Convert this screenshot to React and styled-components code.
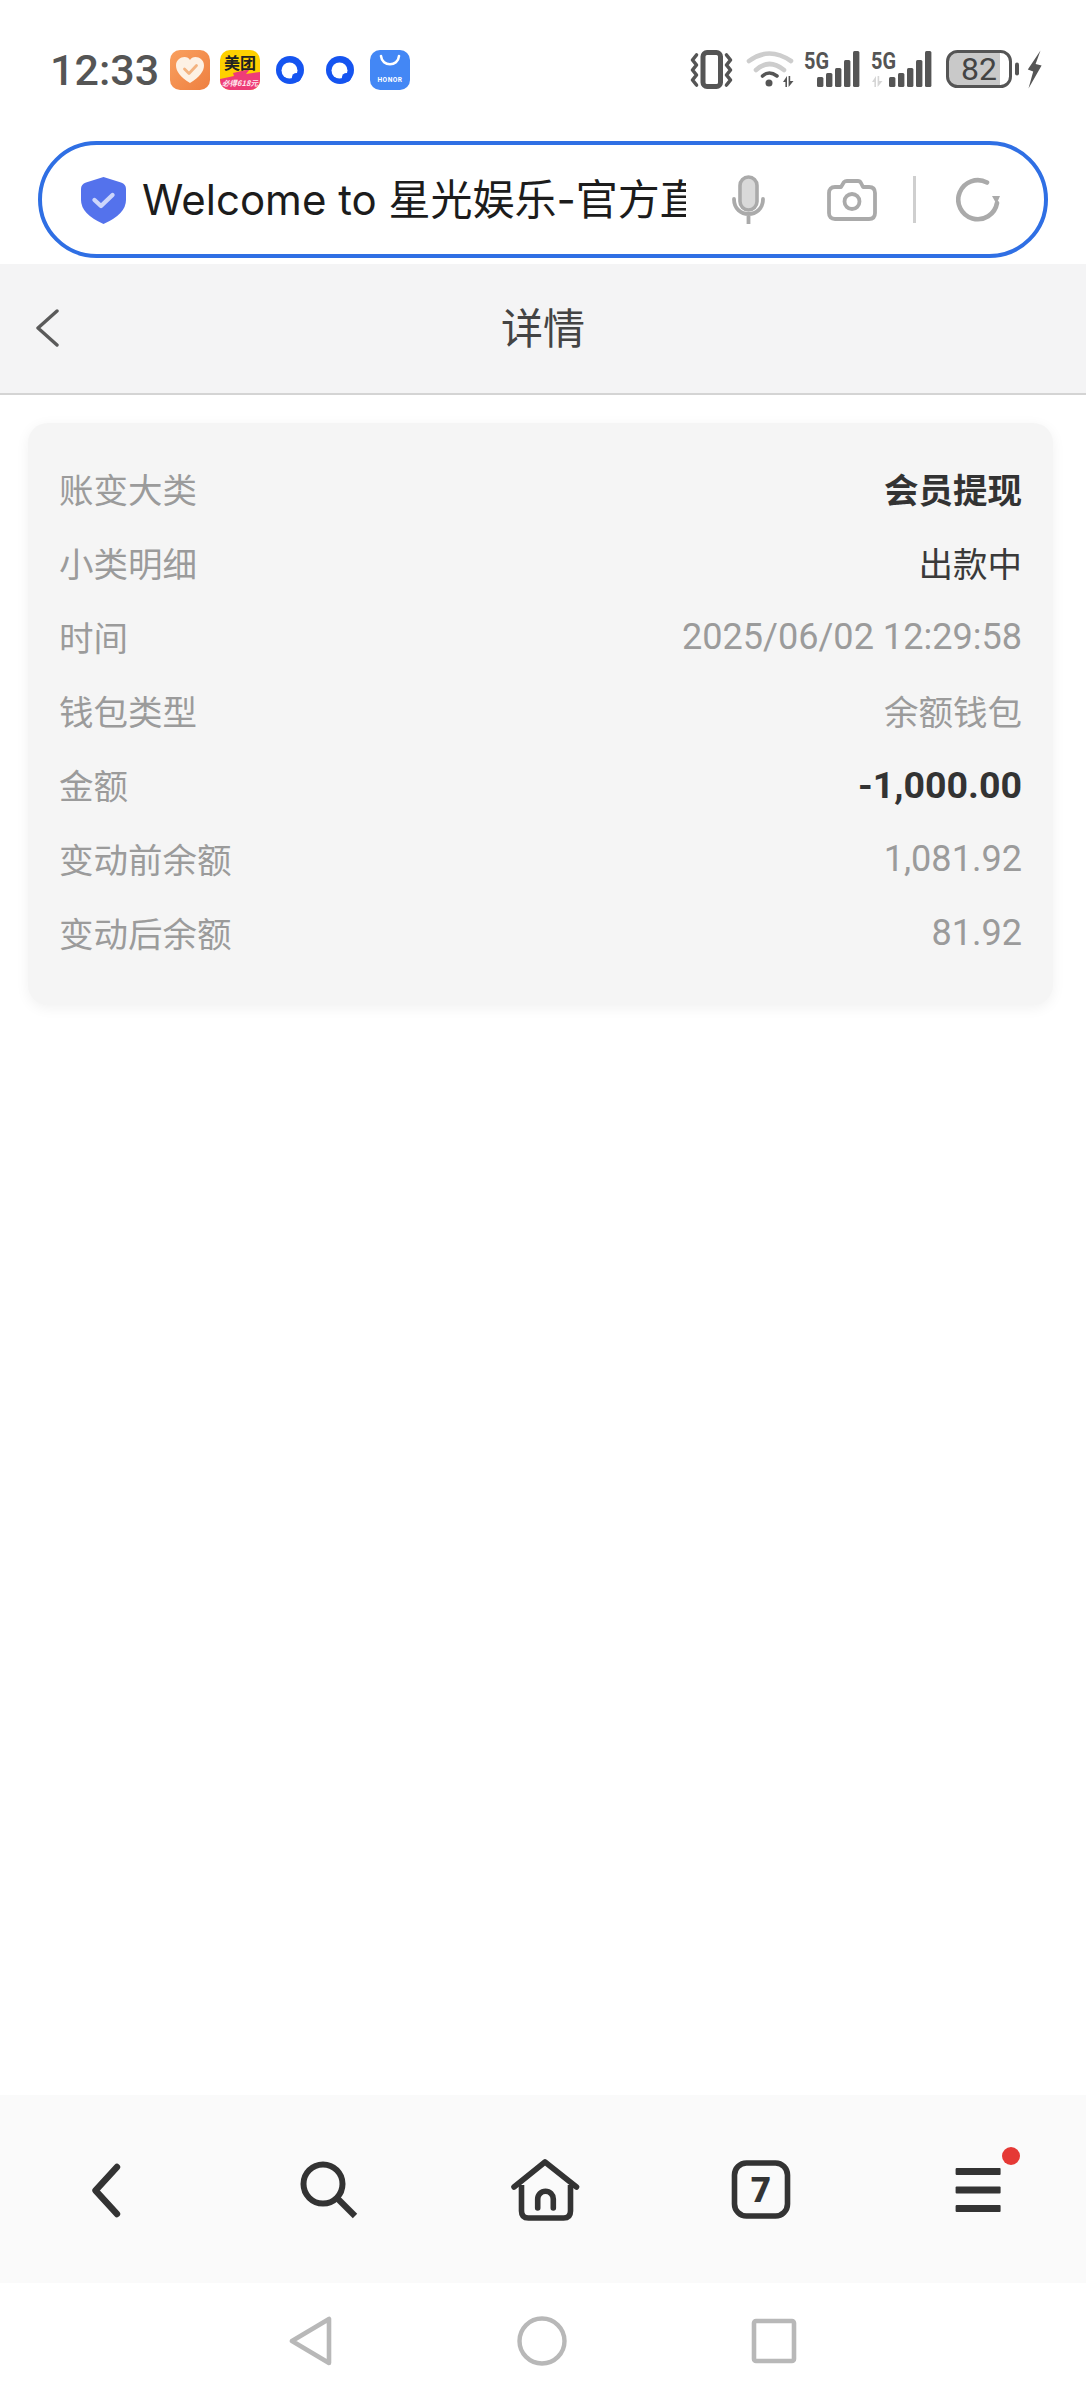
import React from 'react';
import styled, { createGlobalStyle } from 'styled-components';

const GlobalStyle = createGlobalStyle`
  html, body { margin: 0; padding: 0; background: #fff; }
  body { font-family: Roboto, "Noto Sans CJK SC", sans-serif; }
  * { box-sizing: border-box; }
`;

const rows = [
  { label: '账变大类', value: '会员提现', tone: 'strong' },
  { label: '小类明细', value: '出款中', tone: 'dark' },
  { label: '时间', value: '2025/06/02 12:29:58', numeric: true },
  { label: '钱包类型', value: '余额钱包' },
  { label: '金额', value: '-1,000.00', tone: 'strong', numeric: true },
  { label: '变动前余额', value: '1,081.92', numeric: true },
  { label: '变动后余额', value: '81.92', numeric: true },
];

const SignalBars = ({ x }) => (
  <g fill="#555">
    <rect x={x} y="27" width="6.4" height="10" rx="1.5" />
    <rect x={x + 9} y="23" width="6.4" height="14" rx="1.5" />
    <rect x={x + 18} y="18" width="6.4" height="19" rx="1.5" />
    <rect x={x + 27} y="10" width="6.4" height="27" rx="1.5" />
    <rect x={x + 36} y="1" width="6.4" height="36" rx="1.5" />
  </g>
);

const FiveG = () => (
  <text x="0" y="19" fontFamily="Roboto, sans-serif" fontWeight="700" fontSize="23" fill="#555" textLength="25" lengthAdjust="spacingAndGlyphs">
    5G
  </text>
);

const Arrows = ({ x, fill }) => (
  <g fill={fill} transform={`translate(${x} 26)`}>
    <path d="M0 6 L4 0 V11 H2.4 V6 Z" />
    <path d="M5.6 0 H7.2 V5 H10.5 L5.6 11 Z" />
  </g>
);

const QuarkIcon = () => (
  <AppIcon viewBox="0 0 40 40">
    <circle cx="20" cy="20" r="14" fill="#1554f0" />
    <circle cx="19.5" cy="20.5" r="8" fill="#fff" />
    <circle cx="26.5" cy="27.5" r="4.6" fill="#1554f0" />
  </AppIcon>
);

const App = () => (
  <Page>
    <GlobalStyle />
    <StatusBar>
      <Time>12:33</Time>
      <AppIcons>
        <AppIcon viewBox="0 0 40 40">
          <defs>
            <linearGradient id="orangeBg" x1="0" y1="0" x2="1" y2="1">
              <stop offset="0" stopColor="#f9a05f" />
              <stop offset="1" stopColor="#ee7f40" />
            </linearGradient>
          </defs>
          <rect width="40" height="40" rx="10" fill="url(#orangeBg)" />
          <path d="M20 33 C10 27 6 21 6 15.5 C6 10 10.5 7 14.5 7 C17 7 19 8.2 20 10 C21 8.2 23 7 25.5 7 C29.5 7 34 10 34 15.5 C34 21 30 27 20 33 Z" fill="#fdf1e4" />
          <path d="M14.5 19 L19 23.5 L26.5 15.5" fill="none" stroke="#f3b380" strokeWidth="2.8" strokeLinecap="round" strokeLinejoin="round" />
        </AppIcon>
        <AppIcon viewBox="0 0 40 40">
          <rect width="40" height="40" rx="10" fill="#ffd000" />
          <path d="M0 29 L14 26 L13 23 L30 19 L26 24 L40 22 V30 A10 10 0 0 1 30 40 H10 A10 10 0 0 1 0 30 Z" fill="#ee3c78" />
          <text x="20" y="19" textAnchor="middle" fontFamily="'Noto Sans CJK SC', sans-serif" fontWeight="700" fontSize="16" fill="#222">美团</text>
          <text x="20" y="36" textAnchor="middle" fontFamily="'Noto Sans CJK SC', sans-serif" fontStyle="italic" fontWeight="700" fontSize="7.5" fill="#ffe9ef">必得618元</text>
        </AppIcon>
        <QuarkIcon />
        <QuarkIcon />
        <AppIcon viewBox="0 0 40 40">
          <rect width="40" height="40" rx="10" fill="#4387f5" />
          <path d="M11 6 C12 17 28 17 29 6" fill="none" stroke="#fff" strokeWidth="2.6" strokeLinecap="round" />
          <text x="20" y="32" textAnchor="middle" fontFamily="Roboto, sans-serif" fontWeight="700" fontSize="6.6" letterSpacing="0.5" fill="#fff">HONOR</text>
        </AppIcon>
      </AppIcons>
      <SystemIcons>
        <StatusIcon width="43" height="40" viewBox="0 0 43 40">
          <rect x="13" y="2.5" width="17.5" height="34" rx="4" fill="none" stroke="#555" strokeWidth="5" />
          <path d="M6.5 5 L2.5 10 L6.5 15 L2.5 20 L6.5 25 L2.5 30 L6.5 35" fill="none" stroke="#555" strokeWidth="3.6" strokeLinejoin="round" strokeLinecap="round" />
          <path d="M36.5 5 L40.5 10 L36.5 15 L40.5 20 L36.5 25 L40.5 30 L36.5 35" fill="none" stroke="#555" strokeWidth="3.6" strokeLinejoin="round" strokeLinecap="round" />
        </StatusIcon>
        <StatusIcon $ml={14} width="46" height="40" viewBox="0 0 46 40">
          <path d="M2 11 Q22 -4 44 11" fill="none" stroke="#cdcdcd" strokeWidth="4.6" strokeLinecap="round" />
          <path d="M9 20 Q22 8 37 20" fill="none" stroke="#cdcdcd" strokeWidth="4.6" strokeLinecap="round" />
          <path d="M15.5 26 Q22 20 30 26" fill="none" stroke="#555" strokeWidth="3.6" strokeLinecap="round" />
          <circle cx="22" cy="33" r="3.5" fill="#555" />
          <Arrows x={36} fill="#555" />
        </StatusIcon>
        <StatusIcon $ml={11} width="55" height="40" viewBox="0 0 55 40">
          <FiveG />
          <SignalBars x={13} />
        </StatusIcon>
        <StatusIcon $ml={12} width="60" height="40" viewBox="0 0 60 40">
          <FiveG />
          <Arrows x={1} fill="#d6d6d6" />
          <SignalBars x={18} />
        </StatusIcon>
        <StatusIcon $ml={15} width="73" height="40" viewBox="0 0 73 40">
          <path d="M11 2 H54 V35.5 H11 A9 9 0 0 1 2 26.5 V11 A9 9 0 0 1 11 2 Z" fill="#c9c9c9" />
          <rect x="1.5" y="1.5" width="63" height="35" rx="10" fill="none" stroke="#555" strokeWidth="3" />
          <text x="33" y="30" textAnchor="middle" fontFamily="Roboto, sans-serif" fontSize="32" fill="#444">82</text>
          <rect x="69" y="12.5" width="4" height="13" rx="2" fill="#555" />
        </StatusIcon>
        <StatusIcon $ml={8} width="15" height="40" viewBox="0 0 15 40">
          <path d="M13.5 0.5 L0.8 19.5 L6.2 21.5 L1.5 38.5 L14.6 15.5 L8.6 14 Z" fill="#555" />
        </StatusIcon>
      </SystemIcons>
    </StatusBar>

    <UrlBar>
      <svg width="45" height="48" viewBox="0 0 45 48">
        <path d="M22.5 1 L40 6.5 Q45 8 45 13 V24 Q45 38 22.5 48 Q0 38 0 24 V13 Q0 8 5 6.5 Z" fill="#5472ec" />
        <path d="M13.5 24 L20 30 L31.5 19" fill="none" stroke="#cdd6fb" strokeWidth="4.4" strokeLinecap="round" strokeLinejoin="round" />
      </svg>
      <UrlText>Welcome to 星光娱乐-官方直营</UrlText>
      <UrlIcon $ml={46} width="33" height="49" viewBox="0 0 33 49">
        <rect x="8" y="2" width="17" height="33" rx="8.5" fill="#d9d9d9" stroke="#aaa" strokeWidth="3.6" />
        <path d="M2 24 C2 44 31 44 31 24 M16.5 40 V49" fill="none" stroke="#aaa" strokeWidth="3.8" strokeLinecap="round" />
      </UrlIcon>
      <UrlIcon $ml={62} width="50" height="42" viewBox="0 0 50 42">
        <path d="M8 8 H14 L17 3 Q18 2 20 2 H31 Q33 2 34 4 L36 8 H42 Q48 8 48 14 V34 Q48 40 42 40 H8 Q2 40 2 34 V14 Q2 8 8 8 Z" fill="none" stroke="#aaa" strokeWidth="3.8" strokeLinejoin="round" />
        <circle cx="25" cy="22.5" r="7.5" fill="none" stroke="#aaa" strokeWidth="3.8" />
      </UrlIcon>
      <UrlDivider />
      <UrlIcon $ml={40} width="44" height="45" viewBox="0 0 44 45">
        <path d="M31 5.5 A19.5 19.5 0 1 0 41 26" fill="none" stroke="#aaa" strokeWidth="4.6" strokeLinecap="round" />
        <path d="M36 19 L44 19 L40.5 27 Z" fill="#aaa" />
      </UrlIcon>
    </UrlBar>

    <NavBar>
      <NavBack width="24" height="38" viewBox="0 0 24 38">
        <path d="M22 2 L3 19 L22 36" fill="none" stroke="#5a5a5a" strokeWidth="3.4" strokeLinecap="round" strokeLinejoin="round" />
      </NavBack>
      <NavTitle>详情</NavTitle>
    </NavBar>

    <Main>
      <Card>
        {rows.map((row) => (
          <Row key={row.label}>
            <Label>{row.label}</Label>
            <Value $tone={row.tone} $numeric={row.numeric}>{row.value}</Value>
          </Row>
        ))}
      </Card>
    </Main>

    <BottomBar>
      <BottomItem>
        <svg width="80" height="64" viewBox="0 0 80 64">
          <path d="M48 10 L26.5 33.5 L48 57" fill="none" stroke="#333" strokeWidth="6.4" strokeLinecap="round" strokeLinejoin="round" />
        </svg>
      </BottomItem>
      <BottomItem>
        <svg width="80" height="64" viewBox="0 0 80 64">
          <circle cx="37" cy="27" r="19.5" fill="none" stroke="#333" strokeWidth="6" />
          <path d="M51 41 L69 59" fill="none" stroke="#333" strokeWidth="6.2" />
        </svg>
      </BottomItem>
      <BottomItem>
        <svg width="80" height="64" viewBox="0 0 80 64">
          <path d="M11 30 L42 5 L73.5 30" fill="none" stroke="#333" strokeWidth="5.6" strokeLinecap="round" strokeLinejoin="round" />
          <path d="M18.5 28 V54 Q18.5 61 25.5 61 H60.5 Q67.5 61 67.5 54 V28" fill="none" stroke="#333" strokeWidth="5.6" />
          <path d="M34.7 51 V42 A7.8 7.8 0 0 1 50.3 42 V51" fill="none" stroke="#333" strokeWidth="5.6" strokeLinecap="round" />
        </svg>
      </BottomItem>
      <BottomItem>
        <svg width="80" height="64" viewBox="0 0 80 64">
          <rect x="14.5" y="6" width="53" height="53" rx="12" fill="none" stroke="#333" strokeWidth="5.6" />
          <text x="41" y="45" textAnchor="middle" fontFamily="Roboto, sans-serif" fontWeight="900" fontSize="35" fill="#333">7</text>
        </svg>
      </BottomItem>
      <BottomItem>
        <MenuWrap>
          <svg width="80" height="64" viewBox="0 0 80 64">
            <g fill="#333">
              <rect x="18.6" y="11" width="45" height="7" rx="1" />
              <rect x="18.6" y="29.5" width="45" height="7" rx="1" />
              <rect x="18.6" y="48" width="45" height="7" rx="1" />
            </g>
          </svg>
          <RedDot />
        </MenuWrap>
      </BottomItem>
    </BottomBar>

    <SystemNav>
      <svg width="44" height="50" viewBox="0 0 44 50">
        <path d="M40 3 V47 L3 25 Z" fill="none" stroke="#b8b8b8" strokeWidth="4.6" strokeLinejoin="round" />
      </svg>
      <svg width="50" height="50" viewBox="0 0 50 50">
        <circle cx="25" cy="25" r="22.5" fill="none" stroke="#b8b8b8" strokeWidth="4.4" />
      </svg>
      <svg width="46" height="46" viewBox="0 0 46 46">
        <rect x="3" y="3" width="40" height="40" rx="2" fill="none" stroke="#b8b8b8" strokeWidth="4.6" />
      </svg>
    </SystemNav>
  </Page>
);

const Page = styled.div`
  width: 1086px;
  min-height: 2400px;
  display: flex;
  flex-direction: column;
  background: #fff;
`;

const StatusBar = styled.div`
  height: 141px;
  padding: 0 44px 1px 50px;
  display: flex;
  align-items: center;
`;

const Time = styled.div`
  width: 120px;
  font-family: Roboto, sans-serif;
  font-size: 43px;
  font-weight: 500;
  line-height: 44px;
  color: #555;
`;

const AppIcons = styled.div`
  display: flex;
  gap: 10px;
`;

const AppIcon = styled.svg`
  display: block;
  width: 40px;
  height: 40px;
`;

const SystemIcons = styled.div`
  margin-left: auto;
  display: flex;
  align-items: center;
`;

const StatusIcon = styled.svg`
  display: block;
  overflow: visible;
  margin-left: ${(p) => p.$ml || 0}px;
`;

const UrlBar = styled.div`
  height: 117px;
  margin: 0 38px;
  padding-left: 39px;
  display: flex;
  align-items: center;
  border: 4px solid #2f6fe4;
  border-radius: 59px;
  background: #fff;
`;

const UrlText = styled.div`
  width: 544px;
  margin-left: 16px;
  overflow: hidden;
  white-space: nowrap;
  font-family: Inter, "Noto Sans CJK SC", sans-serif;
  font-size: 42px;
  line-height: 60px;
  color: #1c1c1c;
`;

const UrlIcon = styled.svg`
  display: block;
  flex: none;
  margin-left: ${(p) => p.$ml}px;
`;

const UrlDivider = styled.div`
  width: 3px;
  height: 47px;
  margin-left: 36px;
  background: #cfcfcf;
`;

const NavBar = styled.div`
  height: 131px;
  margin-top: 6px;
  padding-bottom: 5px;
  display: flex;
  align-items: center;
  justify-content: center;
  position: relative;
  background: #f4f4f5;
  border-bottom: 2px solid #d4d4d4;
`;

const NavBack = styled.svg`
  position: absolute;
  left: 35px;
  top: 45px;
`;

const NavTitle = styled.div`
  font-family: "Noto Sans CJK SC", sans-serif;
  font-size: 42px;
  line-height: 60px;
  color: #444;
`;

const Main = styled.div`
  flex: 1;
  padding: 28px 33px 0 28px;
`;

const Card = styled.div`
  height: 582px;
  padding: 28px 31px 0 31px;
  background: #f5f5f5;
  border-radius: 20px;
  box-shadow: 0 3px 14px rgba(0, 0, 0, 0.06);
`;

const Row = styled.div`
  height: 74px;
  display: flex;
  align-items: center;
  justify-content: space-between;
`;

const Label = styled.div`
  font-family: "Noto Sans CJK SC", sans-serif;
  font-size: 34.5px;
  color: #9b9b9b;
`;

const valueSize = (p) => {
  if (!p.$numeric) return '34.5px';
  return p.$tone === 'strong' ? '37.5px' : '36.1px';
};

const Value = styled.div`
  padding-top: ${(p) => (p.$numeric ? '2px' : '0')};
  font-family: Roboto, "Noto Sans CJK SC", sans-serif;
  font-size: ${valueSize};
  font-weight: ${(p) => (p.$tone === 'strong' ? 700 : 400)};
  color: ${(p) => (p.$tone === 'strong' ? '#333' : p.$tone === 'dark' ? '#3a3a3a' : '#9b9b9b')};
`;

const BottomBar = styled.div`
  height: 188px;
  display: grid;
  grid-template-columns: repeat(5, 1fr);
  background: #fafafa;
`;

const BottomItem = styled.div`
  display: flex;
  align-items: center;
  justify-content: center;
  svg { display: block; }
`;

const MenuWrap = styled.div`
  position: relative;
`;

const RedDot = styled.span`
  position: absolute;
  left: 65px;
  top: -10px;
  width: 18px;
  height: 18px;
  border-radius: 50%;
  background: #e53935;
`;

const SystemNav = styled.div`
  height: 117px;
  padding-bottom: 1px;
  display: flex;
  align-items: center;
  justify-content: center;
  gap: 184px;
  background: #fff;
`;

export default App;
